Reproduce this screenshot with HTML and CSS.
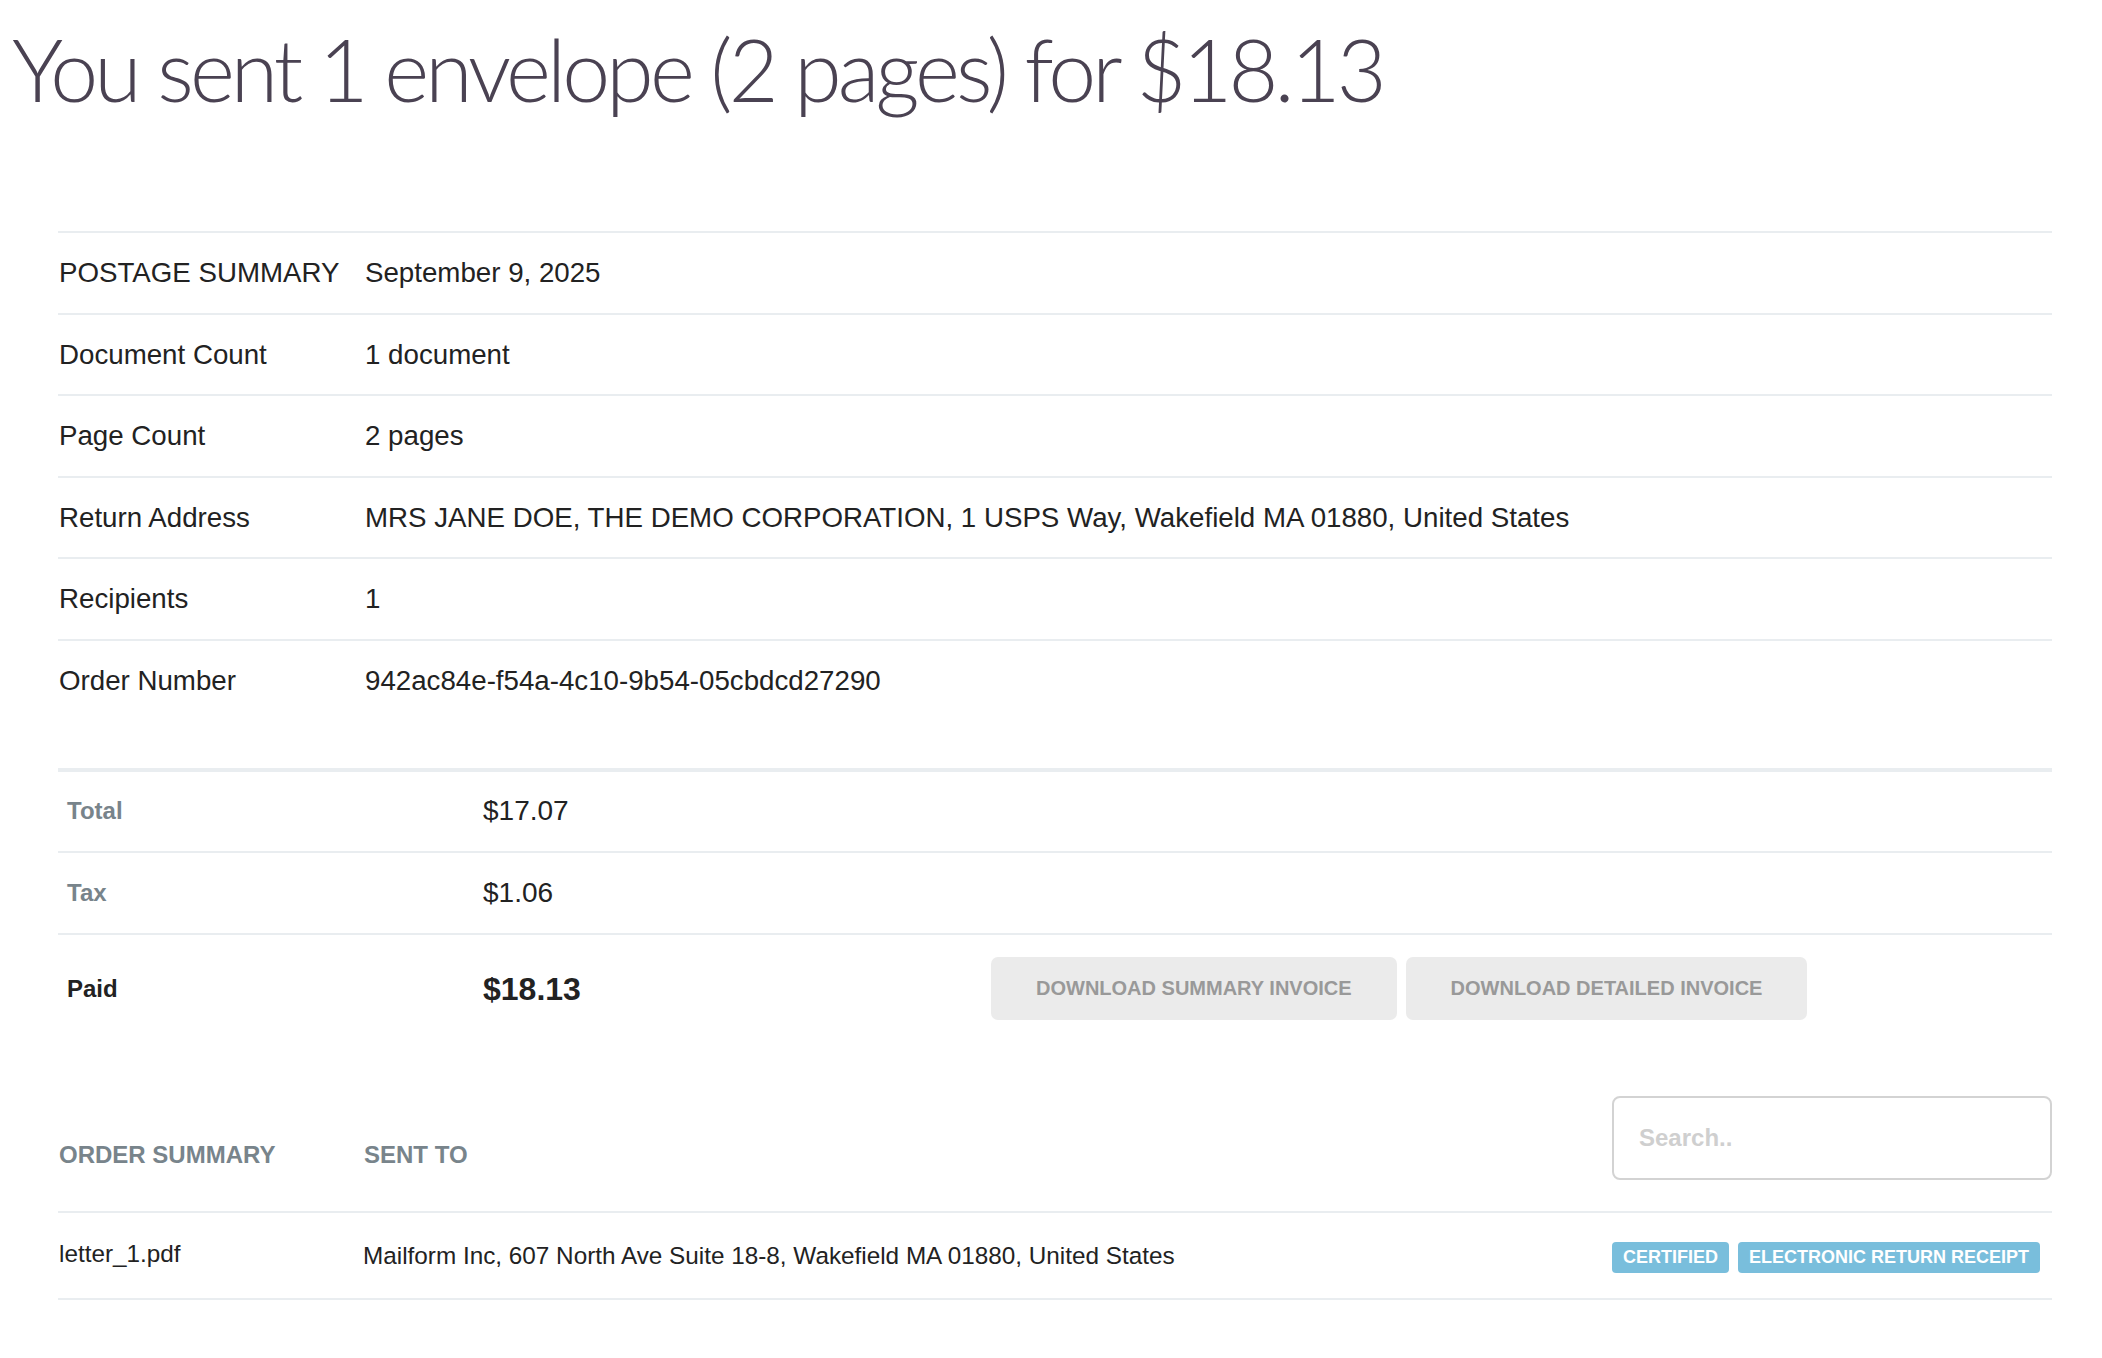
FILE: index.html
```html
<!DOCTYPE html>
<html lang="en">
<head>
    <meta charset="UTF-8">
    <meta name="viewport" content="width=device-width, initial-scale=1.0">
    <title>Postage summary</title>

    <link rel="stylesheet" href="styles.css">
</head>
<body>
    <h1 class="title">You sent 1 envelope (2 pages) for $18.13</h1>

    <div class="content">
        <table class="details">
            <tr>
                <td class="label">POSTAGE SUMMARY</td>
                <td>September 9, 2025</td>
            </tr>
            <tr>
                <td class="label">Document Count</td>
                <td>1 document</td>
            </tr>
            <tr>
                <td class="label">Page Count</td>
                <td>2 pages</td>
            </tr>
            <tr>
                <td class="label">Return Address</td>
                <td>MRS JANE DOE, THE DEMO CORPORATION, 1 USPS Way, Wakefield MA 01880, United States</td>
            </tr>
            <tr>
                <td class="label">Recipients</td>
                <td>1</td>
            </tr>
            <tr>
                <td class="label">Order Number</td>
                <td>942ac84e-f54a-4c10-9b54-05cbdcd27290</td>
            </tr>
        </table>

        <table class="totals">
            <tr class="first">
                <td class="label">Total</td>
                <td class="amount">$17.07</td>
                <td></td>
            </tr>
            <tr>
                <td class="label">Tax</td>
                <td class="amount">$1.06</td>
                <td></td>
            </tr>
            <tr class="paid">
                <td class="label">Paid</td>
                <td class="amount">$18.13</td>
                <td>
                    <div class="buttons">
                        <button class="button">DOWNLOAD SUMMARY INVOICE</button>
                        <button class="button">DOWNLOAD DETAILED INVOICE</button>
                    </div>
                </td>
            </tr>
        </table>

        <div class="orders">
            <div class="orders-head">
                <div class="heading">ORDER SUMMARY</div>
                <div class="heading">SENT TO</div>
                <input type="text" class="search" placeholder="Search..">
            </div>
            <div class="orders-row">
                <div class="file">letter_1.pdf</div>
                <div class="address">Mailform Inc, 607 North Ave Suite 18-8, Wakefield MA 01880, United States</div>
                <div class="badges">
                    <span class="badge">CERTIFIED</span>
                    <span class="badge">ELECTRONIC RETURN RECEIPT</span>
                </div>
            </div>
        </div>
    </div>
</body>
</html>
```

FILE: styles.css
```css
html, body {
    margin: 0;
    padding: 0;
    background: #fff;
}

body {
    font-family: "Liberation Sans", Arial, sans-serif;
    color: #222;
}

.title {
    margin: 0;
    padding: 17px 0 0 12px;
    font-family: Lato, sans-serif;
    font-weight: 300;
    font-size: 86px;
    line-height: 1.2;
    letter-spacing: -0.045em;
    color: #4a4252;
}

.content {
    margin: 111px 50px 0 58px;
}

table {
    width: 100%;
    border-collapse: collapse;
}

.details td {
    border-top: 2px solid #e9edf0;
    padding: 24px 0 23.5px 1px;
    font-size: 27.7px;
    line-height: 32px;
    vertical-align: middle;
}

.details td.label {
    width: 305px;
}

.totals {
    margin-top: 48px;
    table-layout: fixed;
}

.totals td {
    border-top: 2px solid #e9edf0;
    padding: 24px 9px;
    line-height: 32px;
    vertical-align: middle;
}

.totals td:nth-child(1) {
    width: 398px;
}

.totals td:nth-child(2) {
    width: 490px;
}

.totals tr.first td {
    border-top: 4px solid #e9edf0;
    padding-top: 23px;
}

.totals .label {
    font-size: 24px;
    font-weight: bold;
    color: #78848b;
}

.totals .amount {
    font-size: 28px;
}

.totals tr.paid td {
    padding-top: 22px;
}

.totals tr.paid .label {
    color: #222;
}

.totals tr.paid .amount {
    font-size: 32px;
    font-weight: bold;
}

.buttons {
    display: flex;
    gap: 9px;
}

.button {
    height: 63px;
    padding: 0 45px;
    border: none;
    border-radius: 7px;
    background: #ebebeb;
    color: #999;
    font-family: "Liberation Sans", Arial, sans-serif;
    font-size: 20px;
    font-weight: bold;
}

.orders {
    margin-top: 52px;
}

.orders-head, .orders-row {
    display: grid;
    grid-template-columns: 305px 1fr 440px;
    border-bottom: 2px solid #e9edf0;
}

.orders-head {
    padding-bottom: 31px;
}

.heading {
    padding: 43px 0 0 1px;
    font-size: 24px;
    font-weight: bold;
    line-height: 32px;
    color: #78848b;
}

.search {
    box-sizing: border-box;
    width: 440px;
    height: 84px;
    padding: 0 25px;
    border: 2px solid #d3d3d3;
    border-radius: 8px;
    outline: none;
    font-family: "Liberation Sans", Arial, sans-serif;
    font-size: 24px;
    font-weight: bold;
}

.search::placeholder {
    color: #cfcfcf;
}

.orders-row {
    height: 85px;
    align-items: center;
    font-size: 24.3px;
}

.file {
    padding-left: 1px;
    margin-top: -4px;
}

.badges {
    display: flex;
    gap: 9px;
    padding-top: 4px;
}

.badge {
    padding: 5px 11px;
    border-radius: 4px;
    background: #79bedc;
    color: #fff;
    font-size: 18px;
    font-weight: bold;
    line-height: 21px;
}
```
